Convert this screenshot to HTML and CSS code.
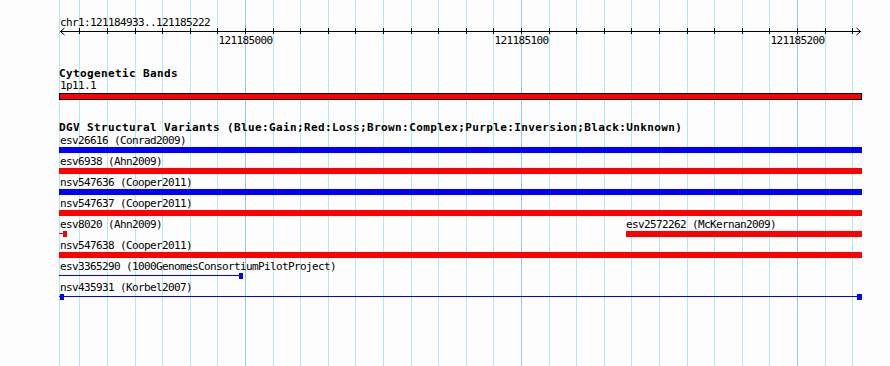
FILE: index.html
```html
<!DOCTYPE html>
<html lang="en">
<head>
  <meta charset="UTF-8" />
  <meta name="viewport" content="width=device-width, initial-scale=1.0" />
  <title>chr1:121184933..121185222</title>
  <link rel="stylesheet" href="styles.css">
</head>
<body>
  <div class="browser">
    <!-- 10 bp grid, one line every 27.6px -->
    <svg class="grid" width="890" height="366" shape-rendering="crispEdges">
      <path class="minor" d="M59.5 0V366M79.5 0V366M107.5 0V366M135.5 0V366M162.5 0V366M190.5 0V366M217.5 0V366M273.5 0V366M300.5 0V366M328.5 0V366M355.5 0V366M383.5 0V366M411.5 0V366M438.5 0V366M466.5 0V366M493.5 0V366M549.5 0V366M576.5 0V366M604.5 0V366M631.5 0V366M659.5 0V366M687.5 0V366M714.5 0V366M742.5 0V366M769.5 0V366M825.5 0V366M852.5 0V366" />
      <path class="major" d="M245.5 0V366M521.5 0V366M797.5 0V366" />
    </svg>

    <div class="panel">
      <div class="locus">chr1:121184933..121185222</div>

      <svg class="ruler" width="803" height="18">
        <path class="axis" shape-rendering="crispEdges" d="M1 3.5H802M20.5 0v6M48.5 0v6M76.5 0v6M103.5 0v6M131.5 0v6M158.5 0v6M186.5 0v6M214.5 0v6M241.5 0v6M269.5 0v6M296.5 0v6M324.5 0v6M352.5 0v6M379.5 0v6M407.5 0v6M434.5 0v6M462.5 0v6M490.5 0v6M517.5 0v6M545.5 0v6M572.5 0v6M600.5 0v6M628.5 0v6M655.5 0v6M683.5 0v6M710.5 0v6M738.5 0v6M766.5 0v6M793.5 0v6" />
        <polyline class="arrow" points="5.5,0 1.5,3.5 5.5,7" />
        <polyline class="arrow" points="797.5,0 801.5,3.5 797.5,7" />
        <text x="186.5" y="16">121185000</text>
        <text x="462.5" y="16">121185100</text>
        <text x="738.5" y="16">121185200</text>
      </svg>

      <div class="track">
        <div class="track-title">Cytogenetic Bands</div>
        <div class="band-label">1p11.1</div>
        <div class="band"></div>
      </div>

      <div class="track">
        <div class="track-title">DGV Structural Variants (Blue:Gain;Red:Loss;Brown:Complex;Purple:Inversion;Black:Unknown)</div>

        <div class="variant">
          <div class="labels"><span style="left:0px">esv26616 (Conrad2009)</span></div>
          <div class="glyphs"><i class="box gain" style="left:0px;width:803px"></i></div>
        </div>
        <div class="variant">
          <div class="labels"><span style="left:0px">esv6938 (Ahn2009)</span></div>
          <div class="glyphs"><i class="box loss" style="left:0px;width:803px"></i></div>
        </div>
        <div class="variant">
          <div class="labels"><span style="left:0px">nsv547636 (Cooper2011)</span></div>
          <div class="glyphs"><i class="box gain" style="left:0px;width:803px"></i></div>
        </div>
        <div class="variant">
          <div class="labels"><span style="left:0px">nsv547637 (Cooper2011)</span></div>
          <div class="glyphs"><i class="box loss" style="left:0px;width:803px"></i></div>
        </div>
        <div class="variant">
          <div class="labels">
            <span style="left:0px">esv8020 (Ahn2009)</span>
            <span style="left:566px">esv2572262 (McKernan2009)</span>
          </div>
          <div class="glyphs">
            <i class="stem loss" style="left:0px;width:4px"></i>
            <i class="box loss" style="left:4px;width:4px"></i>
            <i class="box loss" style="left:567px;width:236px"></i>
          </div>
        </div>
        <div class="variant">
          <div class="labels"><span style="left:0px">nsv547638 (Cooper2011)</span></div>
          <div class="glyphs"><i class="box loss" style="left:0px;width:803px"></i></div>
        </div>
        <div class="variant">
          <div class="labels"><span style="left:0px">esv3365290 (1000GenomesConsortiumPilotProject)</span></div>
          <div class="glyphs">
            <i class="stem gain" style="left:0px;width:181px"></i>
            <i class="box gain" style="left:180px;width:4px"></i>
          </div>
        </div>
        <div class="variant">
          <div class="labels"><span style="left:0px">nsv435931 (Korbel2007)</span></div>
          <div class="glyphs">
            <i class="stem gain" style="left:0px;width:803px"></i>
            <i class="box gain" style="left:1px;width:4px"></i>
            <i class="box gain" style="left:798px;width:5px"></i>
          </div>
        </div>
      </div>
    </div>
  </div>
</body>
</html>
```

FILE: styles.css
```css
body {
  margin: 0;
  background: #fcfdfc;
  color: #000;
  font-family: "DejaVu Sans Mono", "Liberation Mono", monospace;
  font-size: 11px;
  letter-spacing: -0.62px;
}
.browser {
  position: relative;
  width: 890px;
  height: 366px;
  overflow: hidden;
}
.grid {
  position: absolute;
  top: 0;
  left: 0;
}
.grid .minor {
  stroke: #aeeaf0;
  stroke-width: 1;
}
.grid .major {
  stroke: #8fcbe2;
  stroke-width: 1;
}
.panel {
  position: relative;
  width: 803px;
  padding: 16px 0 0 59px;
}
.locus {
  line-height: 13px;
  padding-left: 1px;
}
.ruler {
  display: block;
  margin-top: -1px;
  overflow: visible;
}
.ruler .axis {
  stroke: #000;
  stroke-width: 1;
  fill: none;
}
.ruler .arrow {
  stroke: #000;
  stroke-width: 1;
  fill: none;
}
.ruler text {
  fill: #000;
  text-anchor: middle;
  font-family: "DejaVu Sans Mono", "Liberation Mono", monospace;
  font-size: 11px;
  letter-spacing: -0.62px;
}
.track-title {
  margin-top: 21px;
  line-height: 13px;
  font-weight: bold;
  letter-spacing: 0.38px;
  white-space: nowrap;
}
.band-label {
  line-height: 12px;
  padding-left: 1px;
}
.band {
  box-sizing: border-box;
  height: 7px;
  margin-top: 1px;
  background: #ff0000;
  border: 1px solid #000;
}
.variant {
  margin-bottom: 2px;
}
.labels {
  position: relative;
  height: 13px;
  line-height: 13px;
}
.labels span {
  position: absolute;
  top: 0;
  padding-left: 1px;
  white-space: nowrap;
}
.glyphs {
  position: relative;
  height: 6px;
}
.glyphs i {
  position: absolute;
  display: block;
}
.glyphs .box {
  top: 0;
  height: 6px;
}
.glyphs .stem {
  top: 2px;
  height: 1px;
}
.gain {
  background: #0000ff;
}
.loss {
  background: #ff0000;
}
```
